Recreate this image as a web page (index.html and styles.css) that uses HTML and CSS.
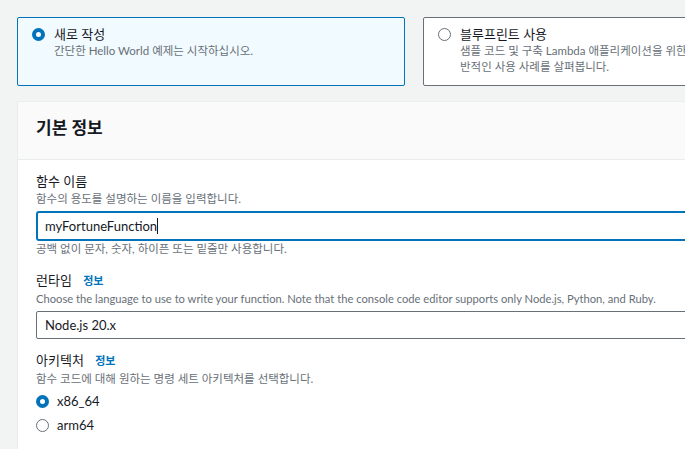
FILE: index.html
```html
<!DOCTYPE html>
<html lang="ko">
<head>
<meta charset="utf-8">
<link rel="stylesheet" href="styles.css">
</head>
<body>
<div class="page">
  <div class="options">
    <div class="card selected">
      <span class="radio on"></span>
      <div class="card-text">
        <div class="card-title">새로 작성</div>
        <div class="card-desc">간단한 Hello World 예제는 시작하십시오.</div>
      </div>
    </div>
    <div class="card">
      <span class="radio"></span>
      <div class="card-text">
        <div class="card-title">블루프린트 사용</div>
        <div class="card-desc">샘플 코드 및 구축 Lambda 애플리케이션을 위한 일<br>반적인 사용 사례를 살펴봅니다.</div>
      </div>
    </div>
  </div>

  <section class="panel">
    <header class="panel-head"><h2>기본 정보</h2></header>
    <div class="panel-body">
      <div class="field name">
        <div class="label">함수 이름</div>
        <div class="desc">함수의 용도를 설명하는 이름을 입력합니다.</div>
        <div class="input focus"><span class="value">myFortuneFunction</span><span class="caret"></span></div>
        <div class="desc">공백 없이 문자, 숫자, 하이픈 또는 밑줄만 사용합니다.</div>
      </div>
      <div class="field runtime">
        <div class="label">런타임 <a class="info">정보</a></div>
        <div class="desc latin">Choose the language to use to write your function. Note that the console code editor supports only Node.js, Python, and Ruby.</div>
        <div class="input select"><span class="value">Node.js 20.x</span></div>
      </div>
      <div class="field">
        <div class="label">아키텍처 <a class="info">정보</a></div>
        <div class="desc">함수 코드에 대해 원하는 명령 세트 아키텍처를 선택합니다.</div>
        <div class="radio-row"><span class="radio on"></span><span class="opt">x86_64</span></div>
        <div class="radio-row"><span class="radio"></span><span class="opt">arm64</span></div>
      </div>
    </div>
  </section>
</div>
</body>
</html>
```

FILE: styles.css
```css
html, body {
  margin: 0;
  padding: 0;
  overflow: hidden;
  background: #f2f3f3;
}
body {
  font-family: "Lato", "Noto Sans CJK KR", sans-serif;
  color: #16191f;
  width: 685px;
  height: 449px;
}
.page {
  padding: 17px 0 0 17px;
  width: 1000px;
}
.options {
  display: flex;
  gap: 18px;
}
.card {
  box-sizing: border-box;
  width: 388px;
  height: 69px;
  border: 1px solid #687078;
  border-radius: 2px;
  background: #fff;
  display: flex;
  align-items: flex-start;
  gap: 9px;
  padding: 8px 14px 0 14px;
}
.card.selected {
  border-color: #0073bb;
  background: #f1faff;
}
.radio {
  box-sizing: border-box;
  flex: none;
  width: 13px;
  height: 13px;
  border-radius: 50%;
  border: 1.5px solid #687078;
  background: #fff;
}
.radio.on {
  border: 4px solid #0073bb;
}
.card .radio { margin-top: 2px; }
.card-title {
  font-size: 13px;
  line-height: 17px;
}
.card-desc {
  font-size: 11.5px;
  line-height: 16px;
  color: #687078;
  white-space: nowrap;
}
.panel {
  margin-top: 15px;
  background: #fff;
  border-left: 1px solid #eaeded;
  border-top: 1px solid #eaeded;
  height: 400px;
}
.panel-head {
  box-sizing: border-box;
  height: 58px;
  background: #fafafa;
  border-bottom: 1px solid #eaeded;
  padding: 14px 0 0 18px;
}
.panel-head h2 {
  margin: 0;
  font-size: 17px;
  font-weight: 700;
  line-height: 24px;
}
.panel-body {
  padding: 11px 0 0 18px;
}
.field.name { margin-bottom: 13px; }
.field.runtime { margin-bottom: 11px; }
.label {
  font-size: 13px;
  line-height: 20px;
}
.info {
  font-size: 11px;
  font-weight: 700;
  color: #0073bb;
  margin-left: 8px;
}
.desc {
  font-size: 11.5px;
  line-height: 16px;
  color: #687078;
}
.desc.latin { font-size: 11.2px; }
.input {
  box-sizing: border-box;
  margin-top: 4px;
  width: 700px;
  height: 28px;
  border: 1px solid #687078;
  border-radius: 2px;
  display: flex;
  align-items: center;
  padding-left: 8px;
  font-size: 13px;
}
.input.focus {
  height: 30px;
  border: 2px solid #0073bb;
  border-radius: 3px;
  padding-left: 7px;
}
.caret {
  display: inline-block;
  width: 1px;
  height: 16px;
  background: #16191f;
}
.radio-row {
  display: flex;
  align-items: center;
  gap: 8px;
  height: 24px;
  font-size: 13px;
}
.desc + .radio-row { margin-top: 2px; }
.opt { line-height: 20px; }
```
